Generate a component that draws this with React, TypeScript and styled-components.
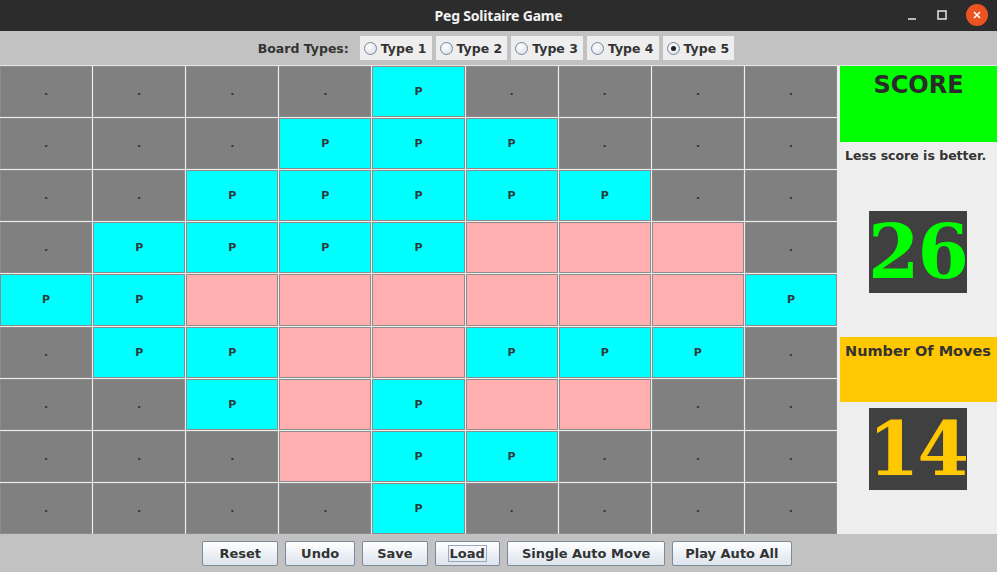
import React from "react";
import styled, { createGlobalStyle } from "styled-components";

const Global = createGlobalStyle`
  html, body { margin: 0; padding: 0; background: #c2c2c2; }
  body { width: 997px; height: 572px; overflow: hidden; font-family: "DejaVu Sans", sans-serif; }
`;

const Window = styled.div`
  width: 997px;
  height: 572px;
  display: flex;
  flex-direction: column;
  background: #c2c2c2;
`;

const TitleBar = styled.div`
  height: 31px;
  flex: none;
  background: #2c2c2c;
  display: flex;
  align-items: center;
  justify-content: center;
  position: relative;
  color: #f2f2f2;
  font-family: "Noto Sans", "DejaVu Sans", sans-serif;
  font-weight: 700;
  font-size: 14px;
  letter-spacing: -0.2px;
`;

const WinControls = styled.div`
  position: absolute;
  right: 9px;
  top: 4px;
  display: flex;
  align-items: center;
  gap: 18px;
`;

const CloseBtn = styled.div`
  width: 22px;
  height: 22px;
  border-radius: 50%;
  background: #e95420;
  display: flex;
  align-items: center;
  justify-content: center;
`;

const TopBar = styled.div`
  height: 34px;
  flex: none;
  display: flex;
  align-items: center;
  justify-content: center;
  gap: 4px;
  padding-right: 5px;
  border-bottom: 1px solid #e6e6e6;
`;

const Label = styled.span`
  font-weight: 700;
  font-size: 12.5px;
  color: #333;
  margin-right: 7px;
`;

const RadioItem = styled.div`
  height: 24px;
  background: #eeeeee;
  display: flex;
  align-items: center;
  gap: 4px;
  padding: 0 5px 0 4px;
  font-weight: 700;
  font-size: 12.5px;
  color: #333;
`;

const RadioCircle = styled.span<{ $on?: boolean }>`
  width: 11px;
  height: 11px;
  border-radius: 50%;
  border: 1px solid #7a8699;
  background: radial-gradient(circle at 40% 35%, #ffffff 0%, #dfe6ee 70%, #c9d3de 100%);
  display: flex;
  align-items: center;
  justify-content: center;
  &::after {
    content: "";
    display: ${(p) => (p.$on ? "block" : "none")};
    width: 5px;
    height: 5px;
    border-radius: 50%;
    background: #222;
  }
`;

const Middle = styled.div`
  flex: 1;
  display: flex;
  min-height: 0;
`;

const Board = styled.div`
  width: 837px;
  flex: none;
  display: grid;
  grid-template-columns: repeat(9, 1fr);
  grid-template-rows: repeat(9, 1fr);
  gap: 1px;
  background: #eeeeee;
  padding-right: 1px;
`;

const colors: Record<string, string> = {
  G: "#808080",
  C: "#00ffff",
  R: "#ffafaf",
};

const Cell = styled.div<{ $kind: string }>`
  background: ${(p) => colors[p.$kind]};
  border: 1px solid ${(p) => (p.$kind === "G" ? "#8a8a8a" : "#8c8c8c")};
  display: flex;
  align-items: center;
  justify-content: center;
  font-weight: 700;
  font-size: 11px;
  color: #2b3b3b;
`;

const Side = styled.div`
  flex: 1;
  background: #eeeeee;
  display: flex;
  flex-direction: column;
  padding-left: 2px;
`;

const ScoreBox = styled.div`
  height: 76px;
  background: #00ff00;
  display: flex;
  justify-content: center;
  padding-top: 5px;
  box-sizing: border-box;
  font-weight: 700;
  font-size: 24px;
  color: #2b2b2b;
`;

const Hint = styled.div`
  font-weight: 700;
  font-size: 12.5px;
  color: #333;
  padding: 6px 0 0 5px;
`;

const NumBox = styled.div<{ $color: string; $top?: number }>`
  width: 98px;
  height: 82px;
  flex: none;
  background: #404040;
  align-self: center;
  margin-left: -2px;
  margin-top: ${(p) => p.$top ?? 0}px;
  display: flex;
  align-items: center;
  justify-content: center;
  font-family: "DejaVu Serif", serif;
  font-weight: 700;
  font-size: 74px;
  line-height: 1;
  color: ${(p) => p.$color};
  letter-spacing: -2px;
`;

const MovesBox = styled.div`
  height: 65px;
  background: #ffc800;
  margin-top: 44px;
  margin-bottom: 6px;
  padding: 6px 0 0 5px;
  box-sizing: border-box;
  font-weight: 700;
  font-size: 14.5px;
  color: #333;
`;

const BottomBar = styled.div`
  height: 37px;
  flex: none;
  display: flex;
  align-items: center;
  justify-content: center;
  gap: 7px;
  padding-right: 3px;
  border-top: 1px solid #c2c2c2;
`;

const Button = styled.button<{ $pad?: number }>`
  height: 25px;
  padding: 0 ${(p) => p.$pad ?? 14}px;
  border: 1px solid #7a8a99;
  border-radius: 2px;
  background: linear-gradient(#ffffff 0%, #f2f5f9 35%, #dde4ec 100%);
  font-family: "DejaVu Sans", sans-serif;
  font-weight: 700;
  font-size: 13px;
  color: #333;
  display: flex;
  align-items: center;
`;

const Focus = styled.span`
  outline: 1px solid #99a8bc;
  padding: 0 1px;
`;

const layout = [
  "GGGGCGGGG",
  "GGGCCCGGG",
  "GGCCCCCGG",
  "GCCCCRRRG",
  "CCRRRRRRC",
  "GCCRRCCCG",
  "GGCRCRRGG",
  "GGGRCCGGG",
  "GGGGCGGGG",
];

export default function App() {
  return (
    <Window>
      <Global />
      <TitleBar>
        Peg Solitaire Game
        <WinControls>
          <svg width="12" height="12" viewBox="0 0 12 12">
            <line x1="2" y1="10" x2="10" y2="10" stroke="#e8e8e8" strokeWidth="1.5" />
          </svg>
          <svg width="12" height="12" viewBox="0 0 12 12">
            <rect x="2" y="2" width="8" height="8" fill="none" stroke="#e8e8e8" strokeWidth="1.5" />
          </svg>
          <CloseBtn>
            <svg width="10" height="10" viewBox="0 0 10 10">
              <path d="M2 2 L8 8 M8 2 L2 8" stroke="#fff" strokeWidth="1.5" />
            </svg>
          </CloseBtn>
        </WinControls>
      </TitleBar>
      <TopBar>
        <Label>Board Types:</Label>
        {[1, 2, 3, 4, 5].map((n) => (
          <RadioItem key={n}>
            <RadioCircle $on={n === 5} />
            Type {n}
          </RadioItem>
        ))}
      </TopBar>
      <Middle>
        <Board>
          {layout.flatMap((row, r) =>
            row.split("").map((k, c) => (
              <Cell key={`${r}-${c}`} $kind={k}>
                {k === "G" ? "." : k === "C" ? "P" : ""}
              </Cell>
            ))
          )}
        </Board>
        <Side>
          <ScoreBox>SCORE</ScoreBox>
          <Hint>Less score is better.</Hint>
          <NumBox $color="#00ff00" $top={48}>26</NumBox>
          <MovesBox>Number Of Moves</MovesBox>
          <NumBox $color="#ffc800">14</NumBox>
        </Side>
      </Middle>
      <BottomBar>
        <Button $pad={16}>Reset</Button>
        <Button $pad={15}>Undo</Button>
        <Button>Save</Button>
        <Button $pad={13}>
          <Focus>Load</Focus>
        </Button>
        <Button>Single Auto Move</Button>
        <Button $pad={12}>Play Auto All</Button>
      </BottomBar>
    </Window>
  );
}
